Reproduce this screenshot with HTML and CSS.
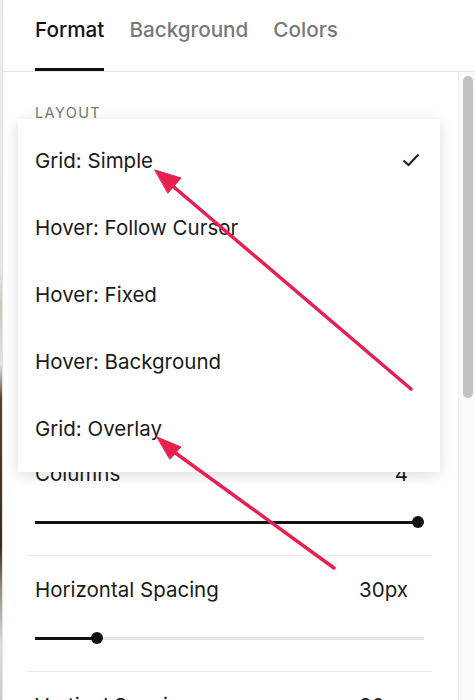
FILE: index.html
```html
<!DOCTYPE html>
<html>
<head>
  <title>Gallery Section - Design</title>
  <link rel="stylesheet" href="styles.css">
</head>
<body>
  <div class="app">
    <div class="edge"></div>
    <div class="panel">
      <div class="tabs">
        <div class="tab active">Format</div>
        <div class="tab">Background</div>
        <div class="tab">Colors</div>
      </div>

      <div class="body">
        <div class="content">
          <div class="layout">
            <div class="label">Layout</div>

            <ul class="menu">
              <li class="item selected">
                <span>Grid: Simple</span>
                <svg class="check" width="18" height="14" viewBox="0 0 18 14">
                  <path d="M1.5 7.5 L6.5 12 L16.5 1.5" fill="none" stroke="#222" stroke-width="2"/>
                </svg>
              </li>
              <li class="item"><span>Hover: Follow Cursor</span></li>
              <li class="item"><span>Hover: Fixed</span></li>
              <li class="item"><span>Hover: Background</span></li>
              <li class="item"><span>Grid: Overlay</span></li>
            </ul>
          </div>

          <div class="field">
            <div class="row"><span>Columns</span><span class="value">4</span></div>
            <div class="slider">
              <div class="fill" style="width: 98.5%"></div>
              <div class="thumb" style="left: 98.5%"></div>
            </div>
          </div>

          <div class="field">
            <div class="row"><span>Horizontal Spacing</span><span class="value">30px</span></div>
            <div class="slider">
              <div class="fill" style="width: 16%"></div>
              <div class="thumb" style="left: 16%"></div>
            </div>
          </div>

          <div class="field">
            <div class="row"><span>Vertical Spacing</span><span class="value">30px</span></div>
            <div class="slider">
              <div class="fill" style="width: 16%"></div>
              <div class="thumb" style="left: 16%"></div>
            </div>
          </div>
        </div>

        <div class="scroll">
          <div class="scroll-thumb"></div>
        </div>
      </div>
    </div>
  </div>

  <!-- annotation arrows drawn on top of the panel -->
  <svg class="marks" width="475" height="700" viewBox="0 0 475 700">
    <g fill="#e8204f" stroke="#e8204f" stroke-linecap="round">
      <line x1="411" y1="389" x2="168" y2="182" stroke-width="3.5"/>
      <polygon points="155,170 181,178 168,193" stroke-width="1"/>
      <line x1="334" y1="568" x2="170" y2="449" stroke-width="3.5"/>
      <polygon points="157,437 181,447 170,459" stroke-width="1"/>
    </g>
  </svg>
</body>
</html>
```

FILE: styles.css
```css
html, body {
  margin: 0;
  height: 700px;
  overflow: hidden;
}
body {
  font-family: Inter, "Liberation Sans", sans-serif;
  color: #1a1a1a;
  background: #fff;
  position: relative;
}
.app {
  display: flex;
  height: 700px;
}
.edge {
  width: 2px;
  background: linear-gradient(#eee 0%, #e6e6e6 38%, #c9cbb5 44%, #e3e3e3 52%, #5a4028 57%, #3b2a1a 78%, #9a8a76 84%, #ddd 92%, #ccc 100%);
}
.panel {
  flex: 1;
  display: flex;
  flex-direction: column;
  border-left: 1px solid #e2e2e2;
  min-width: 0;
}

/* tabs */
.tabs {
  display: flex;
  gap: 25px;
  padding-left: 32px;
  height: 71px;
  border-bottom: 1px solid #e4e4e4;
}
.tab {
  box-sizing: border-box;
  height: 71px;
  padding-top: 17px;
  font-size: 20.7px;
  line-height: 26px;
  font-weight: 500;
  color: #787878;
}
.tab.active {
  color: #111;
  border-bottom: 3px solid #111;
}

.body {
  flex: 1;
  display: flex;
  min-height: 0;
}
.content {
  flex: 1;
  padding: 33px 26px 0 24px;
  position: relative;
}

/* layout label and its open menu */
.layout {
  position: relative;
  height: 335px;
  padding: 0 8px;
}
.label {
  font-size: 14.5px;
  line-height: 16px;
  letter-spacing: 1.4px;
  text-transform: uppercase;
  color: #777;
}
.menu {
  position: absolute;
  top: 14px;
  left: -9px;
  width: 422px;
  margin: 0;
  padding: 8px 0 10px;
  list-style: none;
  background: #fff;
  box-shadow: 0 3px 14px rgba(0, 0, 0, 0.14);
  z-index: 5;
}
.item {
  display: flex;
  align-items: center;
  justify-content: space-between;
  height: 67px;
  padding: 0 20px 0 17px;
  font-size: 20.5px;
}
.check {
  margin-top: -2px;
}

/* slider fields */
.field {
  padding: 22px 8px 27px;
  border-bottom: 1px solid #e8e8e8;
}
.row {
  display: flex;
  justify-content: space-between;
  font-size: 20.5px;
  line-height: 24px;
}
.value {
  margin-right: 16px;
}
.slider {
  position: relative;
  height: 12px;
  margin-top: 30px;
}
.slider::before {
  content: "";
  position: absolute;
  left: 0;
  right: 0;
  top: 5px;
  height: 3px;
  background: #e6e6e6;
}
.fill {
  position: absolute;
  left: 0;
  top: 5px;
  height: 3px;
  background: #111;
}
.thumb {
  position: absolute;
  top: 0;
  width: 12px;
  height: 12px;
  margin-left: -6px;
  border-radius: 50%;
  background: #111;
}

/* scrollbar */
.scroll {
  width: 10px;
  padding: 4px 2px 0 4px;
  border-left: 1px solid #ececec;
  background: #fafafa;
}
.scroll-thumb {
  height: 322px;
  border-radius: 5px;
  background: #c2c2c2;
}

.marks {
  position: absolute;
  top: 0;
  left: 0;
  pointer-events: none;
  z-index: 10;
}
```
